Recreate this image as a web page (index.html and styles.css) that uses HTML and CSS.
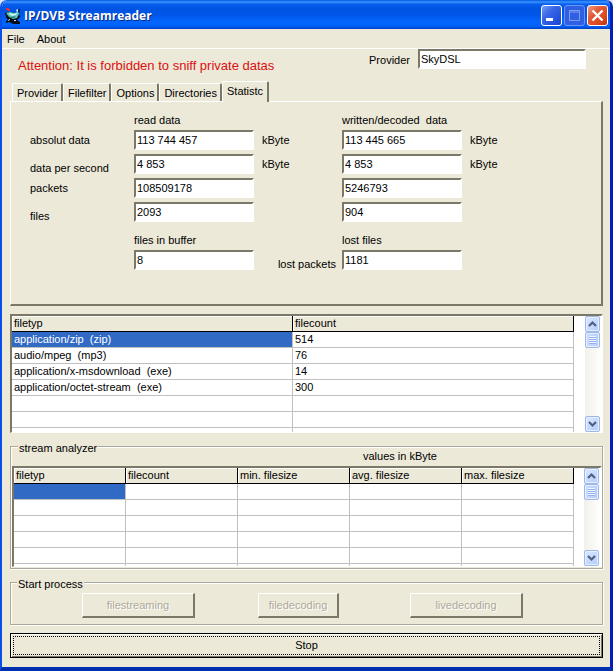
FILE: index.html
```html
<!DOCTYPE html>
<html lang="en">
<head>
<meta charset="utf-8">
<title>IP/DVB Streamreader</title>
<link rel="stylesheet" href="styles.css">
</head>
<body>
<div class="window">
  <header class="titlebar">
    <svg class="app-icon" viewBox="0 0 16 16" aria-hidden="true">
      <path fill="#060c18" d="M0 5l3-1 9 1 2-4h1l-1 5 1 3-3 3 3 2v2H8l-4-2-3 1v-2l2-1-2-3z"/>
      <path fill="#5fc8c0" d="M1 5l4-1 5 1 3-2 1 3-2 4-4 1-4-2z"/>
      <path fill="#c8f8f4" d="M4 5l4 1 4-1-1 2-4 1-3-2zM11 2l2-1v2l-1 1z"/>
      <path fill="#2a7a78" d="M2 7l4 2 5-1-2 2H6z"/>
      <path fill="#d8e8f8" d="M3 12l2-1v1l-2 1zM9 12h2v1H9z"/>
      <path fill="#e03038" d="M1 0h3v1h1v2H3V2H1z"/>
    </svg>
    <h1>IP/DVB Streamreader</h1>
    <div class="window-buttons">
      <button class="win-btn" type="button" aria-label="Minimize">
        <svg viewBox="0 0 19 19"><path fill="#fff" d="M4 12h7v3H4z"/></svg>
      </button>
      <button class="win-btn dim" type="button" aria-label="Maximize" disabled>
        <svg viewBox="0 0 19 19"><path fill="none" stroke="#7f9cef" d="M4.500 4.500h10v10h-10zM4.500 6h10"/></svg>
      </button>
      <button class="win-btn close" type="button" aria-label="Close">
        <svg viewBox="0 0 19 19"><path fill="none" stroke="#fff" stroke-width="2.400" d="M4.500 4.500l10 10M14.500 4.500l-10 10"/></svg>
      </button>
    </div>
  </header>
  <nav class="menu">
    <button type="button">File</button>
    <button type="button">About</button>
  </nav>
  <main>
    <div class="top">
      <p class="warning">Attention: It is forbidden to sniff private datas</p>
      <label for="provider">Provider</label>
      <input class="field" id="provider" type="text" value="SkyDSL">
    </div>

    <div class="tabs" role="tablist">
      <button role="tab" type="button">Provider</button>
      <button role="tab" type="button">Filefilter</button>
      <button role="tab" type="button">Options</button>
      <button role="tab" type="button">Directories</button>
      <button role="tab" type="button" aria-selected="true">Statistc</button>
    </div>
    <section class="panel" role="tabpanel">
      <span class="c2">read data</span><span class="c4">written/decoded&nbsp; data</span>

      <label class="c1" for="abs-r">absolut data</label>
      <input class="field c2" id="abs-r" type="text" value="113 744 457"><span class="c3">kByte</span>
      <input class="field c4" aria-label="absolut data written" type="text" value="113 445 665"><span class="c5">kByte</span>

      <label class="c1 low" for="sec-r">data per second</label>
      <input class="field c2" id="sec-r" type="text" value="4 853"><span class="c3">kByte</span>
      <input class="field c4" aria-label="data per second written" type="text" value="4 853"><span class="c5">kByte</span>

      <label class="c1" for="pack-r">packets</label>
      <input class="field c2" id="pack-r" type="text" value="108509178">
      <input class="field c4" aria-label="packets written" type="text" value="5246793">

      <label class="c1 low" for="files-r">files</label>
      <input class="field c2" id="files-r" type="text" value="2093">
      <input class="field c4" aria-label="files written" type="text" value="904">

      <label class="c2 low" for="buffer">files in buffer</label><label class="c4 low" for="lost">lost files</label>

      <input class="field c2" id="buffer" type="text" value="8">
      <span class="c3 low before">lost packets</span>
      <input class="field c4" id="lost" type="text" value="1181">
    </section>

    <div class="list types">
      <div class="sheet">
        <table>
          <thead><tr><th>filetyp</th><th>filecount</th></tr></thead>
          <tbody>
            <tr><td class="selected">application/zip&nbsp; (zip)</td><td>514</td></tr>
            <tr><td>audio/mpeg&nbsp; (mp3)</td><td>76</td></tr>
            <tr><td>application/x-msdownload&nbsp; (exe)</td><td>14</td></tr>
            <tr><td>application/octet-stream&nbsp; (exe)</td><td>300</td></tr>
            <tr><td></td><td></td></tr>
            <tr><td></td><td></td></tr>
            <tr><td></td><td></td></tr>
          </tbody>
        </table>
      </div>
      <div class="scrollbar">
        <button type="button" aria-label="Up"><svg viewBox="0 0 13 14"><path d="M3 9l3.500-3.500L10 9"/></svg></button>
        <span class="thumb"></span>
        <button class="down" type="button" aria-label="Down"><svg viewBox="0 0 13 14"><path d="M3 5l3.500 3.500L10 5"/></svg></button>
      </div>
    </div>

    <fieldset class="analyzer">
      <legend>stream analyzer</legend>
      <div class="units">values in kByte</div>
      <div class="list stats">
        <div class="sheet">
          <table>
            <thead><tr><th>filetyp</th><th>filecount</th><th>min. filesize</th><th>avg. filesize</th><th>max. filesize</th></tr></thead>
            <tbody>
              <tr><td class="selected"></td><td></td><td></td><td></td><td></td></tr>
              <tr><td></td><td></td><td></td><td></td><td></td></tr>
              <tr><td></td><td></td><td></td><td></td><td></td></tr>
              <tr><td></td><td></td><td></td><td></td><td></td></tr>
              <tr><td></td><td></td><td></td><td></td><td></td></tr>
              <tr><td></td><td></td><td></td><td></td><td></td></tr>
            </tbody>
          </table>
        </div>
        <div class="scrollbar">
          <button type="button" aria-label="Up"><svg viewBox="0 0 13 14"><path d="M3 9l3.500-3.500L10 9"/></svg></button>
          <span class="thumb"></span>
          <button class="down" type="button" aria-label="Down"><svg viewBox="0 0 13 14"><path d="M3 5l3.500 3.500L10 5"/></svg></button>
        </div>
      </div>
    </fieldset>

    <fieldset class="process">
      <legend>Start process</legend>
      <div class="actions">
        <button type="button" disabled>filestreaming</button>
        <button type="button" disabled>filedecoding</button>
        <button type="button" disabled>livedecoding</button>
      </div>
    </fieldset>

    <button class="stop" type="button"><span>Stop</span></button>
  </main>
</div>
</body>
</html>
```
FILE: styles.css
```css
* { box-sizing: border-box; }

body {
  margin: 0;
  background: #d8e4f8;
  color: #000;
  font: 11px/14px "Liberation Sans", Arial, sans-serif;
}

button, input {
  margin: 0;
  padding: 0;
  border: 0;
  border-radius: 0;
  background: none;
  color: inherit;
  font: inherit;
}

.window {
  display: flex;
  flex-direction: column;
  min-height: 100vh;
  border: solid #0a50e8;
  border-width: 0 3px 4px 2px;
  border-right-color: #0020b8;
  border-bottom-color: #0030b0;
  border-radius: 7px 7px 0 0;
  background: #ece9d8;
  overflow: hidden;
}

/* Title bar */
.titlebar {
  display: flex;
  align-items: center;
  height: 29px;
  margin: 0 -3px 0 -2px;
  padding: 2px 5px 0;
  background: linear-gradient(#0058e0 0, #3c94ff 2px, #0a60ee 4px, #0054e3 8px, #0056e8 15px, #0466ff 22px, #0062f8 26px, #0040c8 29px);
}
.app-icon { width: 16px; height: 16px; }
h1 {
  flex: 1;
  margin: 0 0 0 3px;
  color: #fff;
  font: bold 12px/16px "Open Sans", "Noto Sans", sans-serif;
  text-shadow: 1px 1px #0a2a80;
}
.window-buttons { display: flex; gap: 2px; }
.win-btn {
  width: 21px;
  height: 21px;
  border: 1px solid #fff;
  border-radius: 3px;
  background: linear-gradient(135deg, #7a9ff5 0, #3a68e8 35%, #2450dc 75%, #1a44c8 100%);
}
.win-btn svg { display: block; width: 19px; height: 19px; }
.dim { border-color: #6f93f0; background: #2f60e4; }
.close { background: linear-gradient(135deg, #f0a08c 0, #e25a38 35%, #dc4a20 70%, #b83410 100%); }

/* Menu */
.menu {
  display: flex;
  gap: 12px;
  height: 20px;
  padding: 0 5px;
  border-bottom: 1px solid #fff;
}

main { padding: 0 7px 9px 8px; }

.field {
  width: 120px;
  height: 20px;
  padding: 0 2px 0 1px;
  border: 2px solid;
  border-color: #7c7868 #fff #fff #7c7868;
  background: #fff;
}

.top {
  display: flex;
  align-items: flex-start;
  height: 32px;
  padding: 0 17px 0 8px;
}
.warning {
  flex: 1;
  margin: 0;
  color: #dc1010;
  font-size: 13px;
  line-height: 34px;
}
.top label { margin-right: 8px; line-height: 22px; }
.top .field { width: 168px; }

/* Tabs */
.tabs {
  display: flex;
  align-items: flex-end;
  height: 20px;
  padding-left: 2px;
}
.tabs button {
  height: 18px;
  padding: 0 3px 0 4px;
  border: solid #fff;
  border-width: 1px 2px 0 1px;
  border-right-color: #7c7868;
  border-radius: 2px 2px 0 0;
}
.tabs button[aria-selected] {
  z-index: 1;
  height: 21px;
  margin-bottom: -1px;
  padding: 0 4px 2px;
  background: #ece9d8;
}

.panel {
  display: grid;
  grid-template-columns: 104px 128px 80px 128px 1fr;
  grid-template-rows: 20px repeat(6, 24px);
  align-items: start;
  height: 205px;
  padding: 8px 0 0 19px;
  border: solid #fff;
  border-width: 1px 2px 2px 1px;
  border-right-color: #7c7868;
  border-bottom-color: #7c7868;
  line-height: 20px;
}
.c1 { grid-column: 1; }
.c2 { grid-column: 2; }
.c3 { grid-column: 3; }
.c4 { grid-column: 4; }
.c5 { grid-column: 5; }
.low { align-self: end; }
.before { justify-self: end; padding-right: 6px; }

/* Lists */
.list {
  display: flex;
  border: solid #7c7868;
  border-width: 2px 2px 1px;
  border-right-color: #fff;
  border-bottom-color: #fff;
  background: #fff;
}
.types { height: 119px; margin-top: 8px; }
.stats { height: 101px; }
.sheet {
  flex: 1;
  padding-right: 10px;
  overflow: hidden;
}
.types .sheet { padding-right: 11px; }
table {
  width: 100%;
  border-collapse: separate;
  border-spacing: 0;
  table-layout: fixed;
}
th, td {
  height: 16px;
  padding: 0 2px;
  border-right: 1px solid #c0c0c0;
  border-bottom: 1px solid #c0c0c0;
  font-weight: normal;
  line-height: 15px;
  text-align: left;
  white-space: nowrap;
}
th {
  border-color: #000;
  background: #ece9d8;
  box-shadow: inset 1px 1px #fff;
}
.selected { background: #316ac5; color: #fff; }

.scrollbar {
  display: flex;
  flex-direction: column;
  width: 16px;
  background: linear-gradient(90deg, #f2f0ea, #fefefc);
}
.scrollbar button, .thumb {
  width: 15px;
  height: 16px;
  border: 1px solid #9db8ec;
  border-radius: 2px;
  background: linear-gradient(135deg, #dce8ff, #b4ccfa);
  box-shadow: inset 0 0 0 1px #e6efff;
}
.scrollbar svg { display: block; width: 13px; height: 14px; }
.scrollbar path { fill: none; stroke: #4d6185; stroke-width: 2.200; }
.scrollbar .down { margin-top: auto; }
.thumb {
  padding: 3px;
  background:
    repeating-linear-gradient(#f2f7ff 0 1px, #92b0ee 1px 2px) content-box,
    linear-gradient(90deg, #cddcff, #b8ccfa);
}

/* Group boxes */
fieldset {
  min-width: 0;
  margin: 13px 0 0;
  padding: 0;
  border: 1px solid #aca899;
  box-shadow: 1px 1px #fff, inset 1px 1px #fff;
}
legend {
  float: left;
  margin: -6px 0 0 6px;
  padding: 0 1px;
  background: #ece9d8;
}
.analyzer { padding: 0 0 1px 1px; }
.units { padding-left: 351px; line-height: 19px; }
.process { height: 43px; }
.actions {
  display: grid;
  grid-template-columns: 176px 152px 113px;
  padding: 10px 0 0 71px;
}
.process legend { margin-right: -80px; }
.actions button {
  width: 113px;
  height: 25px;
  border: solid #fff;
  border-width: 1px 2px 2px 1px;
  border-right-color: #7c7868;
  border-bottom-color: #7c7868;
  color: #aca899;
  text-shadow: 1px 1px #fff;
}
.actions button:nth-child(2) { width: 81px; }

.stop {
  display: block;
  width: 100%;
  height: 25px;
  margin-top: 8px;
  padding: 2px;
  border: 1px solid #000;
  box-shadow: inset 1px 1px #fff, inset -1px -1px #7c7868;
}
.stop span {
  display: block;
  border: 1px dotted #000;
  line-height: 17px;
}
```
